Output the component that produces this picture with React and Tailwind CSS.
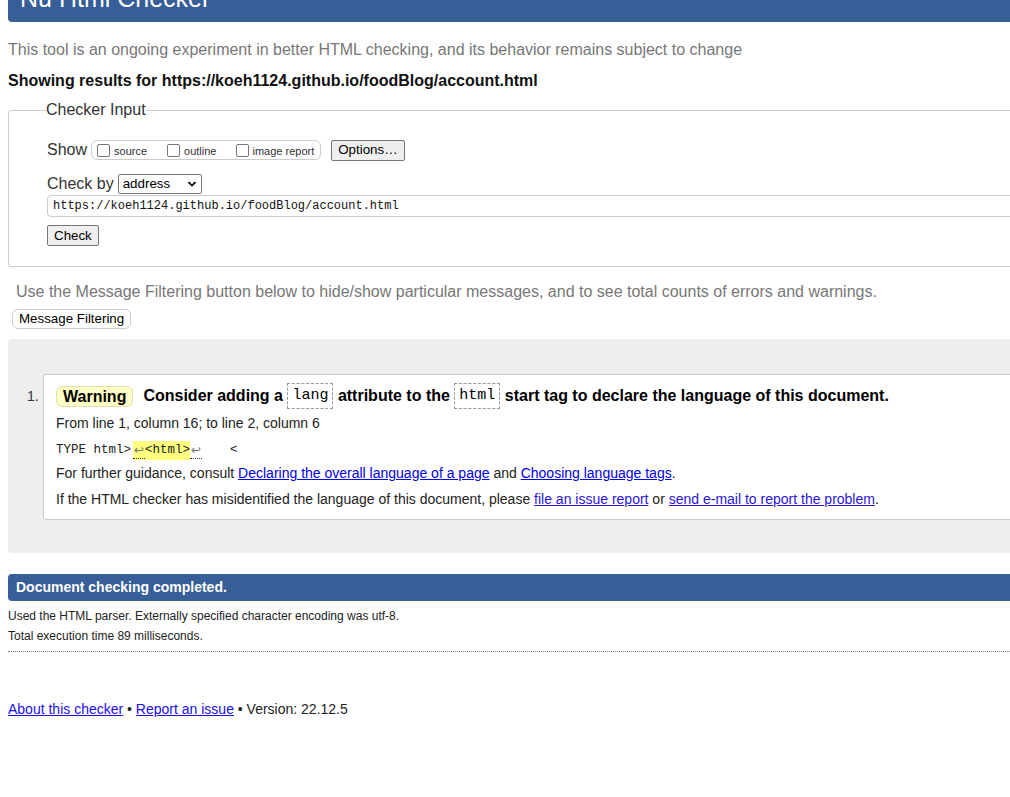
import React from 'react';

const Box = () => (
  <span className="inline-block w-[13px] h-[13px] border border-[#767676] rounded-[2px] bg-white shrink-0" />
);

const Tag = ({ children }) => (
  <code className="inline-block border border-dashed border-[#999] px-[4px] leading-[24px] font-normal text-[15px] font-['Liberation_Mono',monospace] align-middle">
    {children}
  </code>
);

const Ret = () => (
  <span className="inline-block w-[12px] text-center text-[12px] text-[#777] font-['DejaVu_Sans',sans-serif] border-b border-dotted border-[#333] leading-[15px]">↩</span>
);

const App = () => {
  return (
    <div className="w-[1010px] h-[797px] overflow-hidden bg-white text-[#222] font-['Liberation_Sans',Arial,sans-serif]">
      <div className="w-[1240px] px-2">
        {/* Header */}
        <div className="h-[22px] overflow-hidden rounded-b-[4px] bg-[#375e96]">
          <h1 className="text-white text-[25px] leading-[25px] mt-[-14px] pl-3">Nu Html Checker</h1>
        </div>

        <p className="mt-[19px] text-[16px] leading-[18px] text-[#777]">
          This tool is an ongoing experiment in better HTML checking, and its behavior remains subject to change
        </p>
        <p className="mt-[13px] text-[16px] leading-[18px] font-bold text-[#111]">
          Showing results for https://koeh1124.github.io/foodBlog/account.html
        </p>

        {/* Checker input */}
        <fieldset className="mt-[11px] border border-[#ccc] rounded-[3px] pl-[37px] pb-[20px]">
          <legend className="text-[16px] leading-[18px] text-[#333] px-0">Checker Input</legend>
          <div className="pt-[21px] pl-[1px]">
            <div className="flex items-center h-[20px]">
              <span className="text-[16px] text-[#333] mr-[4px]">Show</span>
              <div className="flex items-center h-[20px] border border-[#ccc] rounded-[6px] pl-[5px] pr-[6px] text-[11px] text-[#333]">
                <Box />
                <span className="ml-[4px] mt-[3px]">source</span>
                <span className="ml-[20px] flex"><Box /></span>
                <span className="ml-[4px] mt-[3px]">outline</span>
                <span className="ml-[20px] flex"><Box /></span>
                <span className="ml-[3px] mt-[3px]">image report</span>
              </div>
              <button className="block ml-[10px] h-[21px] px-[6px] text-[13.333px] leading-[18px] bg-[#efefef] border border-[#767676] rounded-[2px] text-black">
                Options…
              </button>
            </div>

            <div className="flex items-center h-[20px] mt-[14px]">
              <span className="text-[16px] text-[#333] mr-[4px]">Check by</span>
              <div className="flex items-center justify-between w-[84px] h-[20px] border border-[#767676] rounded-[2px] pl-[4px] pr-[4px] text-[13.333px] text-black">
                <span>address</span>
                <svg width="10" height="10" viewBox="0 0 10 10">
                  <path d="M1.5 3.2 L5 6.6 L8.5 3.2" fill="none" stroke="#000" strokeWidth="1.8" />
                </svg>
              </div>
            </div>

            <div className="mt-[1px] h-[22px] border border-[#ccc] rounded-[4px] flex items-center pl-[5px] text-[12px] font-['Liberation_Mono',monospace] text-[#111]">
              https://koeh1124.github.io/foodBlog/account.html
            </div>

            <button className="block mt-[8px] h-[21px] px-[6px] text-[13.333px] leading-[18px] bg-[#efefef] border border-[#767676] rounded-[2px] text-black">
              Check
            </button>
          </div>
        </fieldset>

        <p className="mt-[16px] pl-2 text-[16px] leading-[18px] text-[#777]">
          Use the Message Filtering button below to hide/show particular messages, and to see total counts of errors and warnings.
        </p>
        <button className="block mt-[8px] ml-[4px] h-[20px] px-[6px] text-[13.333px] leading-[18px] bg-white border border-[#ccc] rounded-[6px] text-black">
          Message Filtering
        </button>

        {/* Results */}
        <div className="mt-[10px] bg-[#eee] rounded-l-[4px] pl-[19px] pt-[35px] pb-[33px]">
          <div className="flex">
            <span className="w-[16px] pr-[5px] text-right text-[14px] leading-[18px] mt-[13px] text-[#333] shrink-0">1.</span>
            <div className="flex-1 bg-white border border-[#ccc] rounded-l-[3px] pl-[12px] pt-[8px] pb-[7px]">
              <p className="text-[16px] leading-[26px] font-bold text-black flex items-center">
                <span className="inline-block bg-[#ffffc8] border border-[#e4dfaa] rounded-[6px] px-[6px] leading-[19px] mr-[10px]">Warning</span>
                Consider adding a&nbsp;<Tag>lang</Tag>&nbsp;attribute to the&nbsp;<Tag>html</Tag>&nbsp;start tag to declare the language of this document.
              </p>
              <p className="mt-[2px] text-[14px] leading-[25px] text-[#222]">From line 1, column 16; to line 2, column 6</p>
              <p className="mt-[2px] h-[25px] flex items-center text-[12.5px] font-['Liberation_Mono',monospace] text-[#222] whitespace-pre">
                <span>TYPE html&gt;</span>
                <span className="flex items-center bg-[#ffff80] ml-[2px]"><Ret /><span>&lt;html&gt;</span></span>
                <Ret />
                <span className="ml-[28px]">&lt;</span>
              </p>
              <p className="mt-[-2px] text-[14px] leading-[25px] text-[#222]">
                For further guidance, consult <a className="text-[#00e] underline" href="#">Declaring the overall language of a page</a> and <a className="text-[#00e] underline" href="#">Choosing language tags</a>.
              </p>
              <p className="mt-[1px] text-[14px] leading-[25px] text-[#222]">
                If the HTML checker has misidentified the language of this document, please <a className="text-[#2a14d8] underline" href="#">file an issue report</a> or <a className="text-[#2a14d8] underline" href="#">send e-mail to report the problem</a>.
              </p>
            </div>
          </div>
        </div>

        <div className="mt-[21px] h-[27px] bg-[#375e96] rounded-l-[4px] flex items-center pl-[8px] text-white font-bold text-[14px]">
          Document checking completed.
        </div>
        <div className="mt-[5px] pb-[5px] border-b border-dotted border-[#777] text-[12px] leading-[20px] text-[#222]">
          <p>Used the HTML parser. Externally specified character encoding was utf-8.</p>
          <p>Total execution time 89 milliseconds.</p>
        </div>

        <p className="mt-[48px] text-[14px] leading-[18px] text-[#222]">
          <a className="text-[#1a0de8] underline" href="#">About this checker</a> • <a className="text-[#1a0de8] underline" href="#">Report an issue</a> • Version: 22.12.5
        </p>
      </div>
    </div>
  );
};

export default App;
